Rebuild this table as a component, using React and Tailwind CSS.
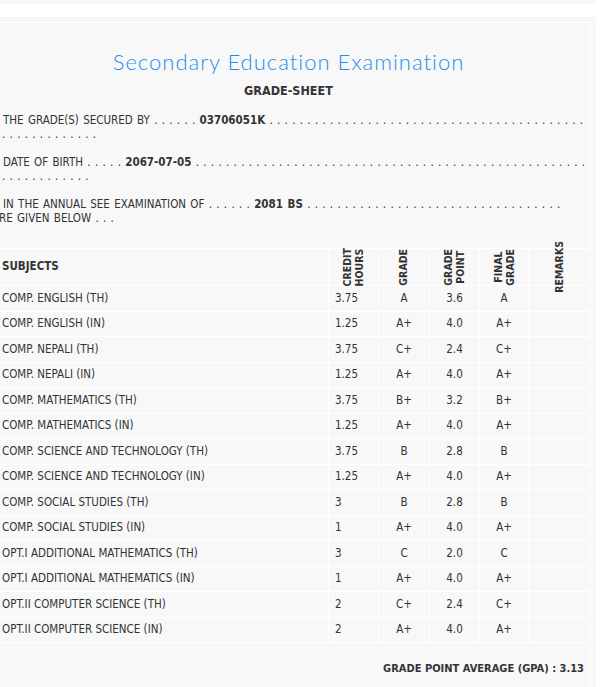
const rows = [
  ["COMP. ENGLISH (TH)", "3.75", "A", "3.6", "A"],
  ["COMP. ENGLISH (IN)", "1.25", "A+", "4.0", "A+"],
  ["COMP. NEPALI (TH)", "3.75", "C+", "2.4", "C+"],
  ["COMP. NEPALI (IN)", "1.25", "A+", "4.0", "A+"],
  ["COMP. MATHEMATICS (TH)", "3.75", "B+", "3.2", "B+"],
  ["COMP. MATHEMATICS (IN)", "1.25", "A+", "4.0", "A+"],
  ["COMP. SCIENCE AND TECHNOLOGY (TH)", "3.75", "B", "2.8", "B"],
  ["COMP. SCIENCE AND TECHNOLOGY (IN)", "1.25", "A+", "4.0", "A+"],
  ["COMP. SOCIAL STUDIES (TH)", "3", "B", "2.8", "B"],
  ["COMP. SOCIAL STUDIES (IN)", "1", "A+", "4.0", "A+"],
  ["OPT.I ADDITIONAL MATHEMATICS (TH)", "3", "C", "2.0", "C"],
  ["OPT.I ADDITIONAL MATHEMATICS (IN)", "1", "A+", "4.0", "A+"],
  ["OPT.II COMPUTER SCIENCE (TH)", "2", "C+", "2.4", "C+"],
  ["OPT.II COMPUTER SCIENCE (IN)", "2", "A+", "4.0", "A+"],
];

const dots = (n) => Array(n).fill(".").join(" ");

function Vert({ children }) {
  return (
    <div className="h-[36px] flex items-center justify-center">
      <div className="[writing-mode:vertical-rl] rotate-180 leading-[11.5px] whitespace-nowrap font-bold text-[10.5px]">
        {children}
      </div>
    </div>
  );
}

export default function App() {
  return (
    <div className="w-[602px] h-[687px] bg-white overflow-hidden text-[#333] font-['DejaVu_Sans_Condensed','Liberation_Sans_Narrow','Liberation_Sans',sans-serif] text-[11.5px]">
      <div className="h-[4px] w-[597px] bg-[#f7f7f7]" />
      <div className="h-[13px]" />
      <div className="w-[596px] h-[670px] bg-[#f7f7f7] pt-[5px] pr-[5px]">
        <div className="ml-[-14px] h-[700px] border border-white bg-[#f8f8f8]">
          <div className="pt-[27px] text-center text-[#1e8ef0] text-[22px] leading-[24px] font-['Lato',sans-serif] font-light tracking-[1px]">
            Secondary Education Examination
          </div>
          <div className="mt-[9px] text-center font-bold text-[12.5px] leading-[16px]">
            GRADE-SHEET
          </div>
          <div className="mt-[14px] pl-[5px] leading-[14px] whitespace-nowrap [word-spacing:1px]">
            <div className="pl-[11px]">
              THE GRADE(S) SECURED BY {dots(6)} <b>03706051K</b> {dots(42)}
            </div>
            <div className="pl-[10px]">{dots(13)}</div>
            <div className="pl-[11px] mt-[14px]">
              DATE OF BIRTH {dots(5)} <b>2067-07-05</b> {dots(52)}
            </div>
            <div className="pl-[10px]">{dots(12)}</div>
            <div className="pl-[11px] mt-[14px]">
              IN THE ANNUAL SEE EXAMINATION OF {dots(6)} <b>2081 BS</b> {dots(34)}
            </div>
            <div>ARE GIVEN BELOW . . .</div>
          </div>
          <table className="mt-[23px] table-fixed border-collapse w-[603px]">
            <colgroup>
              <col className="w-[341px]" />
              <col className="w-[50px]" />
              <col className="w-[51px]" />
              <col className="w-[50px]" />
              <col className="w-[49px]" />
              <col className="w-[62px]" />
            </colgroup>
            <thead>
              <tr>
                <th className="border border-white p-0 pl-[14px] text-left font-bold">SUBJECTS</th>
                <th className="border border-white p-0"><Vert>CREDIT<br />HOURS</Vert></th>
                <th className="border border-white p-0"><Vert>GRADE</Vert></th>
                <th className="border border-white p-0"><Vert>GRADE<br />POINT</Vert></th>
                <th className="border border-white p-0"><Vert>FINAL<br />GRADE</Vert></th>
                <th className="border border-white p-0"><Vert>REMARKS</Vert></th>
              </tr>
            </thead>
            <tbody>
              {rows.map((r) => (
                <tr key={r[0]}>
                  <td className="border border-white h-[25.5px] p-0 pl-[14px] text-left">{r[0]}</td>
                  <td className="border border-white p-0 pl-[6px] text-left">{r[1]}</td>
                  <td className="border border-white p-0 text-center">{r[2]}</td>
                  <td className="border border-white p-0 text-center">{r[3]}</td>
                  <td className="border border-white p-0 text-center">{r[4]}</td>
                  <td className="border border-white p-0"></td>
                </tr>
              ))}
            </tbody>
          </table>
          <div className="mt-[19px] pr-[6px] text-right font-bold text-[11px] leading-[14px]">
            GRADE POINT AVERAGE (GPA) : 3.13
          </div>
        </div>
      </div>
    </div>
  );
}
